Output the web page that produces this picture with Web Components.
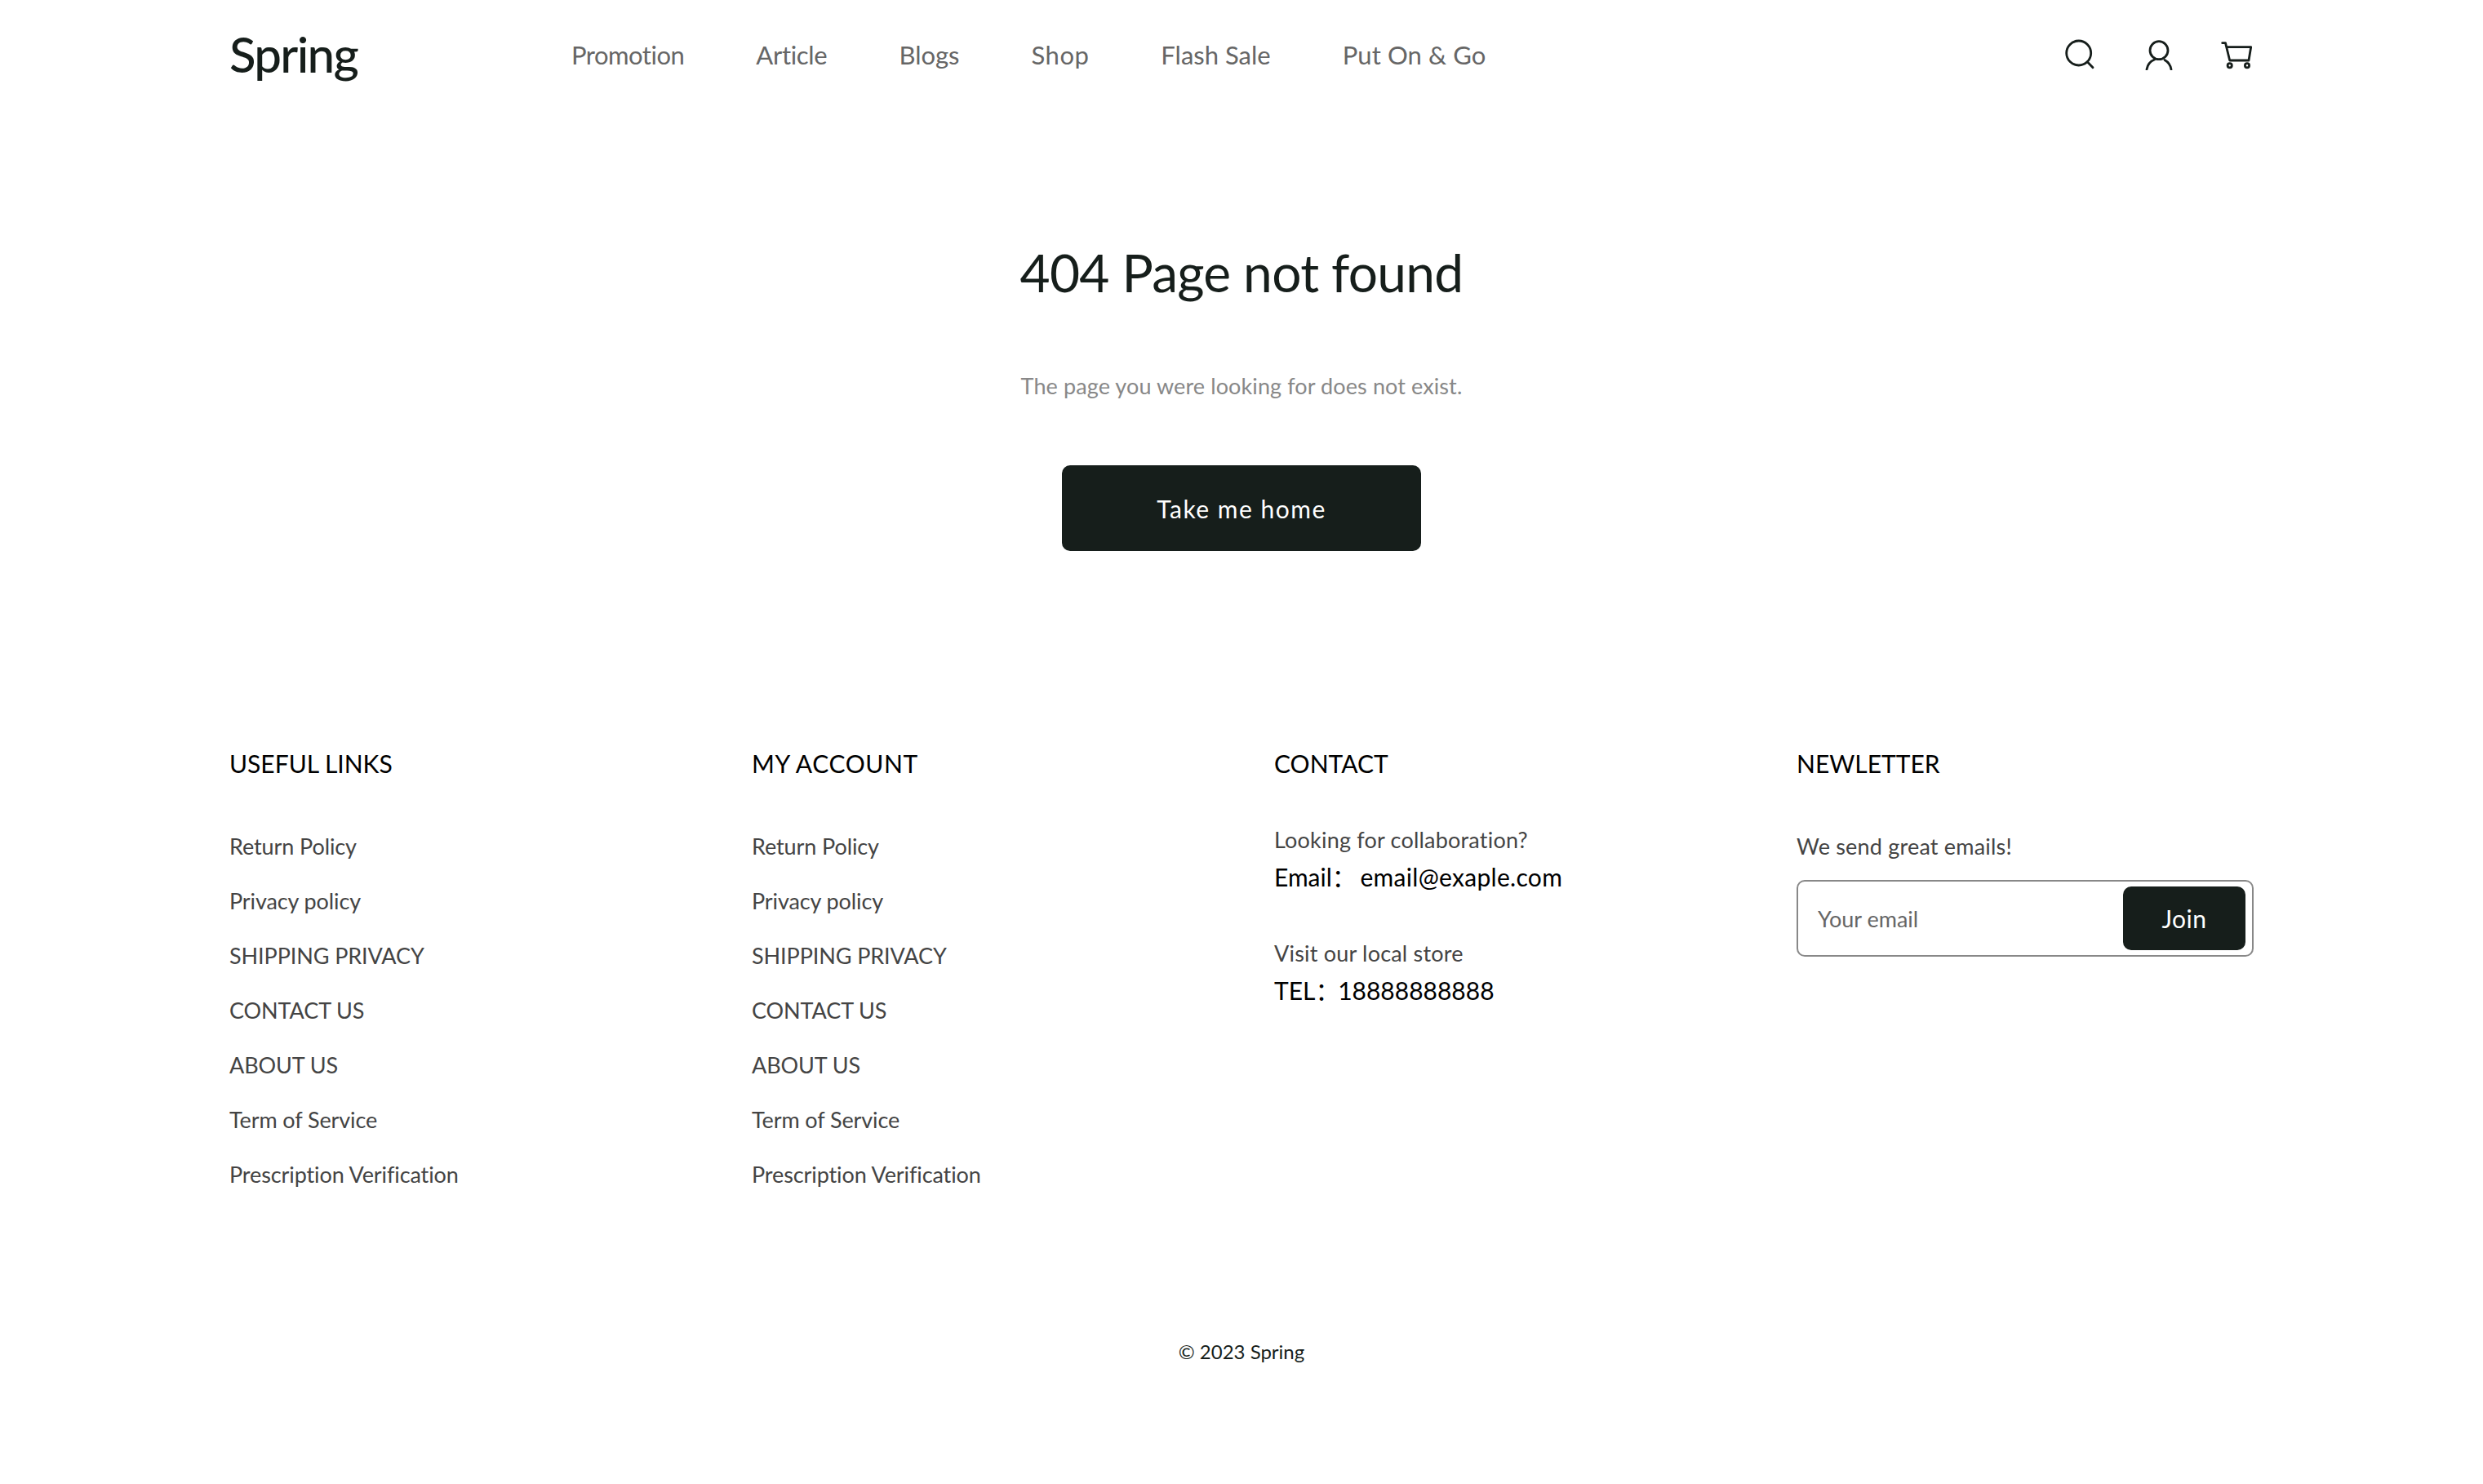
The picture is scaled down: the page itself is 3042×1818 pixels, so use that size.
<!DOCTYPE html>
<html lang="en">
<head>
<meta charset="utf-8">
<title>Spring</title>
<style>
  html, body { margin: 0; background: #fff; }
  body { font-family: Lato, "Noto Sans CJK SC", sans-serif; color: #161e1b; }
</style>
</head>
<body>
<site-header></site-header>
<error-panel></error-panel>
<site-footer>
  <footer-column heading="USEFUL LINKS"></footer-column>
  <footer-column heading="MY ACCOUNT" spacing="0.6"></footer-column>
  <contact-column></contact-column>
  <news-letter></news-letter>
</site-footer>

<script>
const navItems = [["Promotion", -0.5], ["Article", -0.3], ["Blogs", 0], ["Shop", 0.5], ["Flash Sale", 0], ["Put On & Go", 0.1]];
const footerLinks = ["Return Policy", "Privacy policy", "SHIPPING PRIVACY", "CONTACT US", "ABOUT US", "Term of Service", "Prescription Verification"];

class SiteHeader extends HTMLElement {
  constructor() {
    super();
    this._root = this.attachShadow({ mode: "open" });
  }

  connectedCallback() {
    this._root.innerHTML = `
      <style>
        :host { display: flex; align-items: center; height: 132px; padding: 0 281px; box-sizing: border-box; }
        .logo { width: 419px; font-size: 60px; font-weight: 500; letter-spacing: -1.7px; color: #161e1b; }
        nav { display: flex; gap: 88px; flex: 1; padding-top: 2px; }
        nav a { font-size: 31px; color: #666; text-decoration: none; }
        .icons { display: flex; gap: 56px; }
        svg { width: 40px; height: 40px; fill: none; stroke: #161e1b; stroke-width: 2.8; stroke-linecap: round; stroke-linejoin: round; display: block; }
      </style>
      <div class="logo">Spring</div>
      <nav>${navItems.map(([n, ls]) => `<a href="#" style="letter-spacing:${ls}px">${n.replace("&", "&amp;")}</a>`).join("")}</nav>
      <div class="icons">
        <svg viewBox="0 0 40 40"><circle cx="17.700" cy="19" r="15"/><path d="M28.500 30 35 36.700"/></svg>
        <svg viewBox="0 0 40 40"><circle cx="20" cy="15.700" r="11"/><path d="M5 39C6 33 9.500 29 14.500 27M35 39C34 33 31.500 30 27 27.500"/></svg>
        <svg viewBox="0 0 40 40"><path d="M1.700 6.700H5.500L10.700 28H34L36.700 11.700H7.300"/><circle cx="10.700" cy="34.300" r="2.600"/><circle cx="32" cy="34.300" r="2.600"/></svg>
      </div>`;
  }
}

class ErrorPanel extends HTMLElement {
  constructor() {
    super();
    this._root = this.attachShadow({ mode: "open" });
  }

  connectedCallback() {
    this._root.innerHTML = `
      <style>
        :host { display: flex; flex-direction: column; align-items: center; padding-top: 154px; }
        h1 { margin: 0; font-size: 64px; line-height: 96px; font-weight: 400; color: #161e1b; letter-spacing: -0.7px; }
        p { margin: 71px 0 0; font-size: 27px; line-height: 40px; font-weight: 400; letter-spacing: 0.1px; color: #888; }
        a { display: flex; align-items: center; justify-content: center; margin-top: 77px; width: 440px; height: 105px;
            background: #161e1b; color: #fff; border-radius: 10px; font-size: 30px; letter-spacing: 1.500px; text-decoration: none; }
      </style>
      <h1>404 Page not found</h1>
      <p>The page you were looking for does not exist.</p>
      <a href="#">Take me home</a>`;
  }
}

class SiteFooter extends HTMLElement {
  constructor() {
    super();
    this._root = this.attachShadow({ mode: "open" });
  }

  connectedCallback() {
    this._root.innerHTML = `
      <style>
        :host { display: block; padding: 237px 281px 0; }
        .cols { display: grid; grid-template-columns: repeat(4, 560px); column-gap: 80px; min-height: 727px; }
        .copy { text-align: center; font-size: 24px; line-height: 34px; color: #161e1b; }
      </style>
      <div class="cols"><slot></slot></div>
      <div class="copy">© 2023 Spring</div>`;
  }
}

class FooterColumn extends HTMLElement {
  constructor() {
    super();
    this._root = this.attachShadow({ mode: "open" });
  }

  connectedCallback() {
    const spacing = this.getAttribute("spacing") || 0;
    this._root.innerHTML = `
      <style>
        :host { display: block; }
        h3 { margin: 0 0 59px; font-size: 30px; line-height: 46px; font-weight: 400; color: #000; letter-spacing: ${spacing}px; }
        a { display: block; font-size: 27px; line-height: 40px; font-weight: 400; letter-spacing: -0.1px; color: #444; text-decoration: none; margin-bottom: 27px; }
      </style>
      <h3>${this.getAttribute("heading")}</h3>
      ${footerLinks.map((l) => `<a href="#">${l}</a>`).join("")}`;
  }
}

class ContactColumn extends HTMLElement {
  constructor() {
    super();
    this._root = this.attachShadow({ mode: "open" });
  }

  connectedCallback() {
    this._root.innerHTML = `
      <style>
        :host { display: block; }
        h3 { margin: 0 0 51px; font-size: 30px; line-height: 46px; font-weight: 400; color: #000; }
        .q { font-size: 27px; line-height: 40px; font-weight: 400; letter-spacing: 0.2px; color: #444; margin-bottom: 2px; }
        .v { font-size: 30px; line-height: 46px; color: #000; margin-bottom: 51px; }
        .mail { word-spacing: -3px; }
        .mail span { letter-spacing: 0.3px; }
        .tel { word-spacing: -10px; }
      </style>
      <h3>CONTACT</h3>
      <div class="q">Looking for collaboration?</div>
      <div class="v mail">Email： <span>email@exaple.com</span></div>
      <div class="q">Visit our local store</div>
      <div class="v tel">TEL： 18888888888</div>`;
  }
}

class NewsLetter extends HTMLElement {
  constructor() {
    super();
    this._root = this.attachShadow({ mode: "open" });
  }

  connectedCallback() {
    this._root.innerHTML = `
      <style>
        :host { display: block; }
        h3 { margin: 0 0 59px; font-size: 30px; line-height: 46px; font-weight: 400; color: #000; }
        p { margin: 0 0 21px; font-size: 27px; line-height: 40px; font-weight: 400; letter-spacing: 0.2px; color: #444; }
        form { display: flex; align-items: center; height: 94px; box-sizing: border-box; border: 2px solid #888; border-radius: 10px; padding: 0 8px 0 24px; }
        input { flex: 1; min-width: 0; border: 0; outline: none; padding: 0; font: 400 27px Lato, sans-serif; color: #666; background: none; }
        input::placeholder { color: #666; opacity: 1; }
        button { width: 150px; height: 78px; border: 0; border-radius: 10px; background: #161e1b; color: #fff; font: 400 30px Lato, sans-serif; letter-spacing: 0.5px; }
      </style>
      <h3>NEWLETTER</h3>
      <p>We send great emails!</p>
      <form onsubmit="return false"><input type="text" placeholder="Your email"><button>Join</button></form>`;
  }
}

customElements.define("site-header", SiteHeader);
customElements.define("error-panel", ErrorPanel);
customElements.define("site-footer", SiteFooter);
customElements.define("footer-column", FooterColumn);
customElements.define("contact-column", ContactColumn);
customElements.define("news-letter", NewsLetter);
</script>
</body>
</html>
